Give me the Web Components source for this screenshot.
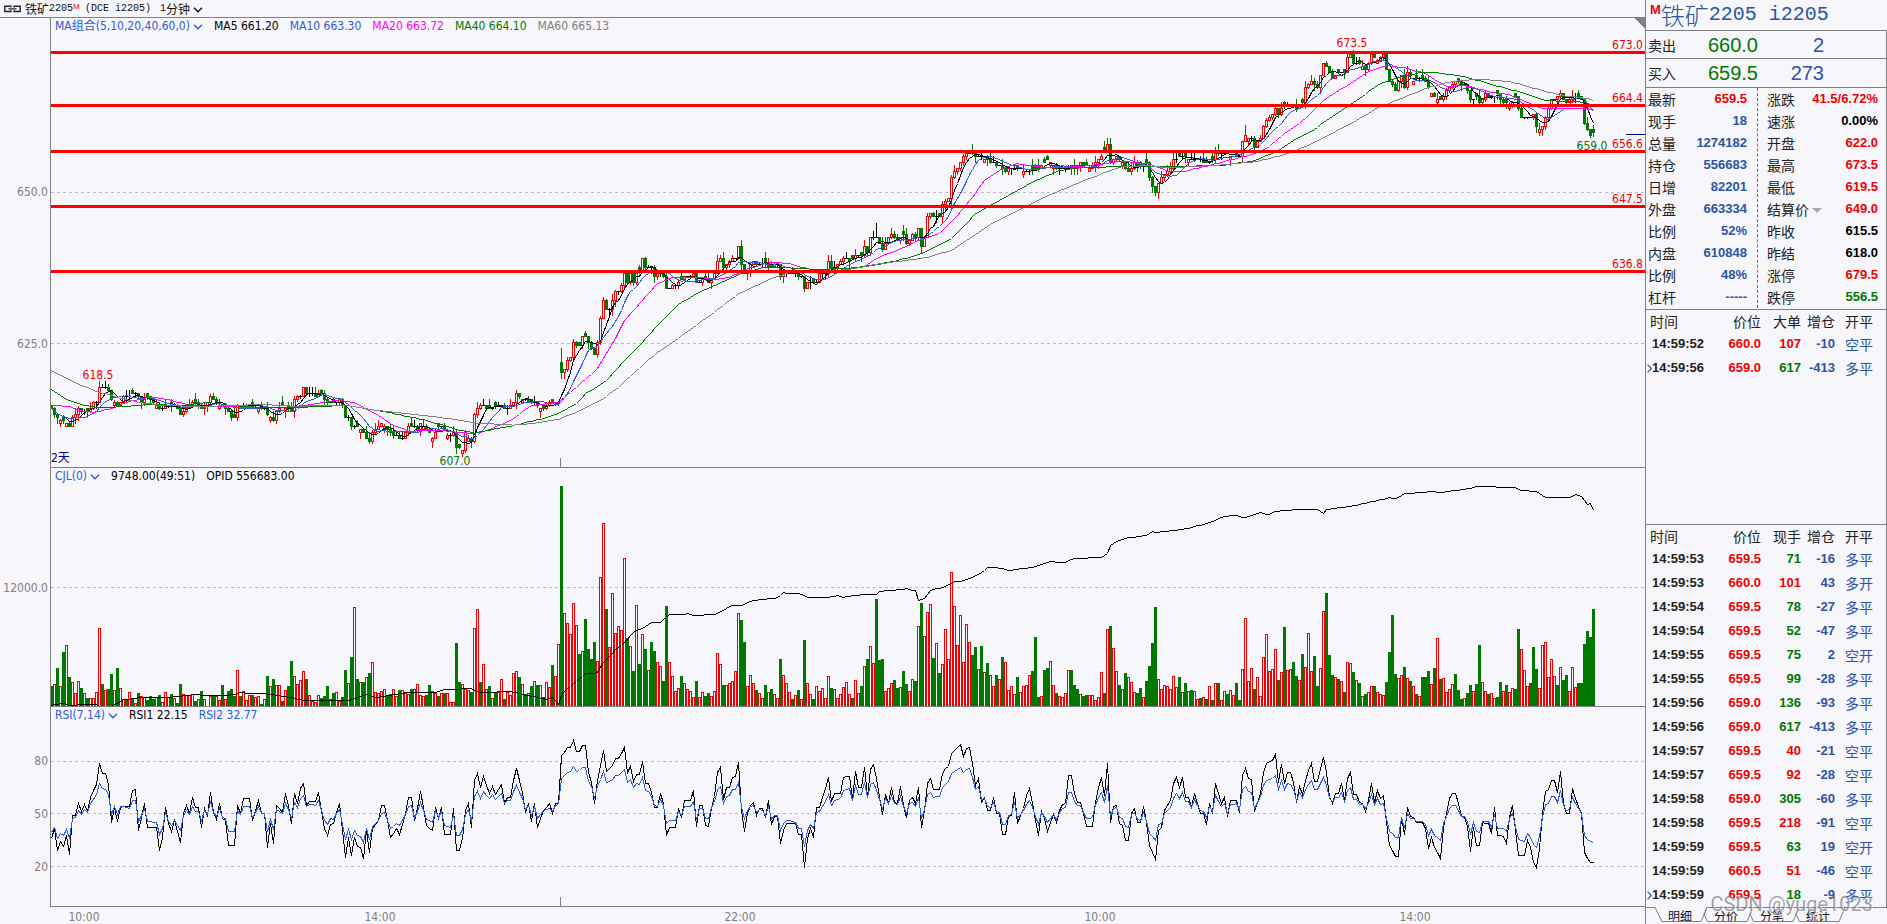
<!DOCTYPE html>
<html lang="zh-CN">
<head>
<meta charset="utf-8">
<title>铁矿2205 1分钟</title>
<style>
html,body{margin:0;height:100%}
body{background:#f6f6fb;color:#222;font:12px/16px "DejaVu Sans Condensed","Noto Sans","Noto Sans CJK SC",sans-serif;overflow:hidden}
</style>
</head>
<body>
<quote-app></quote-app>
<script>
const RED='#f00000',GREEN='#007800',BLUE='#2e5cdc',INK='#000';
const pts=s=>s.trim().split(/\s+/).map(p=>p.split(',').map(Number));
const fill=(s,n=515)=>{const p=pts(s),o=[];let k=0;for(let i=0;i<n;i++){while(k<p.length-2&&p[k+1][0]<=i)k++;const a=p[k],b=p[k+1];o.push(a[1]+(b[1]-a[1])*Math.min(1,(i-a[0])/(b[0]-a[0])))}return o};
const X=i=>51.5+3*i;
let seed=11;const rnd=()=>(seed=(seed*16807)%2147483647)/2147483647;

/* One token per minute: direction, then the top of the bar in thirds of a pixel */
const VOL=`g678 r672 g624 r678 g576 r555 g651 r666 r699 r663 g684 r699 g714 r714 r714 r696 r504 g672 r690 g687 g642 r690 g624 r684 r717 g717 r696 g714 r729 g699 r708 r711 g720 g708 g717 r711 g705 r726 r696 r711 g702 r714 g729 g672 r702 r705 r705 r702 g723 r717 g693 r717 r738 r708 g705 r708 r720 g675 r717 g693 g687 g708 r630 g708 r693 r720 r705 g705 r711 r708 g732 r717 g648 r678 g657 r675 r675 g723 r690 g678 g603 r648 r672 r660 r633 g657 r705 r723 r726 r705 g714 g708 g678 r717 g699 r696 r723 g711 g630 r669 g591 r441 g657 r666 g666 r651 g639 r606 r696 r699 r693 r687 g705 g702 r687 r708 g690 r690 r699 r702 g687 r687 r672 r705 r708 g705 g675 r693 r699 g708 r699 g699 r699 r726 r726 g549 g666 r672 r687 r690 g696 r504 r447 g666 r612 r687 g678 r714 g699 r696 r657 g717 r696 r705 r639 r633 g651 r672 g702 r699 g678 r663 g675 r675 g711 r666 r681 g615 r648 r552
g78 r459 r489 r522 r429 r495 g582 r573 g477 g567 g597 g546 r603 r351 r189 g447 r561 r399 r519 r498 r510 r294 g534 r558 g633 r435 g612 r522 g567 r630 g546 g573 r606 r618 g663 g438 r606 r648 r693 r684 g648 r669 r687 r693 r711 g663 r711 r696 g708 g699 r708 r693 r579 r612 g675 r675 r669 r663 r633 r459 g480 g546 r678 r645 r669 g690 r699 r714 g675 r696 g687 r702 r714 g597 r645 r669 r696 g717 r705 g690 r717 g540 r669 r702 g717 r678 r693 r684 r714 r648 g684 r687 r714 r702 r681 r666 r702 g714 r660 r699 g678 r618 g597 r558 r609 g417 g600 g597 r693 r684 r669 g660 g684 r681 g633 g672 r693 r657 g663 r498 g429 r528 r456 r432 g594 r549 g639 r612 r507 r597 r336 r438 r555 r465 r606 r492 r546 g585 g561 r627 g558 r636 g609 r645 r678 g645 r657 g591 r606 r690 r678 r702 g651 r696 r678 r675 r645 g633 g531 g711 r708 g630 g624 r603 r675 g699 r708 r711 r699 r630 g630 g675 g687
r702 g708 g705 r705 r705 r720 r711 r636 g699 r507 g498 r564 r633 g675 r687 g639 r651 r666 r696 g699 g684 r711 g663 g618 g549 g441 r657 r687 r675 r678 r687 r648 r681 g651 r696 g669 r693 g690 r693 r717 g714 r711 g717 r678 g720 r669 g669 r720 r693 g702 r690 r705 g669 g720 r627 r474 r663 r624 g687 r651 r708 r591 r522 r633 r627 r567 g660 r636 g501 r630 r627 g606 g648 r660 g582 r621 r519 r633 g588 g678 r624 r453 g399 g585 g645 r651 g657 r663 g696 r606 r609 g636 r660 g669 r708 g702 r696 r678 g678 r696 r702 r705 g666 g576 g465 g642 r654 r645 g621 r654 g663 r678 g702 r708 g651 g651 g633 r672 g624 r534 g657 r654 r696 r687 r672 g642 g690 g717 r714 g699 g675 r693 g672 g555 r666 r693 g702 r699 r714 g711 g666 r693 g675 r696 r684 g687 g507 r567 r630 r678 g669 g561 g627 r684 r555 r546 r651 r597 r648 g675 r621 g660 g645 r693 r621 r681 g669 g669 g552 g513 g531 g447`.trim().split(/\s+/).map(t=>[t[0],+t.slice(1)]);

const CLOSE=fill(`0,1225 1,1240 2,1250 3,1262 4,1258 5,1265 6,1275 7,1250 8,1245 9,1228 10,1232 12,1230 13,1220 14,1210 15,1205 16,1165 17,1160 18,1160 19,1172 20,1195 21,1205 22,1215 23,1205 24,1190 26,1190 28,1175 29,1190 30,1205 32,1190 34,1210 36,1225 38,1215 40,1215 42,1222 43,1240 45,1220 47,1205 49,1215 50,1225 52,1210 53,1190 55,1210 57,1215 59,1235 60,1250 61,1252 62,1215 65,1212 67,1215 69,1222 71,1222 72,1240 73,1255 74,1262 75,1230 77,1218 79,1225 80,1235 81,1195 83,1185 84,1165 85,1180 88,1185 90,1180 92,1210 94,1208 96,1195 97,1215 98,1250 99,1255 100,1280 102,1275 104,1300 106,1320 107,1295 108,1290 110,1270 112,1285 114,1305 117,1315 119,1275 121,1280 122,1290 123,1265 125,1285 127,1310 129,1280 130,1275 132,1305 134,1300 135,1340 137,1348 138,1300 140,1325 141,1245 142,1220 144,1215 146,1225 148,1215 150,1215 152,1225 154,1210 155,1180 156,1190 158,1200 160,1205 162,1215 164,1225 166,1205 169,1205
170,1112 171,1105 172,1078 173,1075 174,1030 176,1035 177,1010 178,1005 179,1030 180,1045 181,1058 182,1022 183,958 184,900 185,928 186,925 187,900 188,873 189,870 190,855 191,820 192,845 193,820 194,845 195,815 196,808 197,775 198,802 200,802 201,830 203,815 204,825 205,865 207,858 209,850 211,825 213,830 214,820 215,848 217,835 219,845 221,820 222,785 223,775 224,800 226,780 228,770 229,740 230,790 231,820 232,810 234,780 236,795 238,780 240,800 242,790 243,825 245,815 248,820 250,830 251,865 252,850 255,845 256,820 258,815 259,785 260,800 262,795 264,775 266,780 268,765 270,765 271,740 272,755 273,715 275,712 276,730 277,748 278,725 280,705 282,720 284,700 285,730 287,705 288,710 289,685 290,740 291,715 292,650 293,635 294,645 295,650 296,648 297,615 298,605 299,590 300,530 302,500 304,470 306,455 307,460 311,475 314,485 318,510 322,500 325,515 329,500 332,480 335,505 340,505
343,490 344,495 346,500 348,490 350,470 352,430 353,490 355,465 357,490 359,515 361,490 363,495 365,490 366,535 367,560 368,578 369,545 371,520 373,505 374,475 376,470 378,465 380,480 382,475 384,485 386,490 388,455 390,460 393,465 396,465 397,425 398,405 400,415 401,437 403,415 404,375 406,350 408,325 409,345 410,320 412,315 414,315 415,325 417,305 418,265 420,240 422,260 424,185 425,200 427,235 429,220 431,215 432,175 433,165 434,190 436,185 438,205 440,165 442,180 444,165 445,205 446,240 448,268 450,225 451,260 452,215 454,240 456,235 458,240 460,275 462,295 463,300 464,285 466,260 468,240 469,245 471,250 473,295 475,290 476,305 478,280 480,290 482,280 484,305 486,315 488,290 490,350 492,350 494,345 495,375 496,385 497,380 498,350 500,300 501,295 503,275 505,310 507,285 509,290 510,295 511,365 512,385 513,403 514,400`);

const MA60=fill(`0,1110 10,1156 17,1178 24,1195 30,1207 37,1215 51,1218 70,1212 81,1217 98,1215 109,1230 126,1247 132,1254 141,1267 154,1274 160,1269 169,1256 175,1235 183,1200 189,1160 200,1070 206,1032 214,980 222,928 229,880 239,838 246,817 253,812 265,808 276,790 291,772 300,750 313,672 327,608 333,582 343,545 350,520 356,500 365,495 372,502 389,494 402,483 412,460 420,430 434,365 442,322 457,268 464,248 470,240 477,236 487,245 499,275 505,288 510,290 514,300`);
const MA40=fill(`0,1167 5,1196 11,1215 16,1222 24,1218 33,1212 44,1215 52,1205 59,1214 71,1222 78,1222 98,1215 112,1235 126,1262 135,1287 141,1298 149,1283 153,1278 160,1262 165,1252 169,1238 175,1210 178,1180 185,1140 191,1080 197,1025 203,965 209,912 216,875 224,843 231,815 239,798 246,802 256,807 266,803 275,793 282,780 290,760 300,715 308,640 318,590 328,540 336,510 343,500 350,500 357,497 365,498 376,498 391,494 400,482 407,460 414,420 420,392 428,342 435,300 443,248 450,228 456,217 462,217 471,228 480,252 491,278 498,300 505,303 511,305 514,315`);
const MA20=fill(`0,1214 6,1218 9,1230 14,1235 20,1225 25,1205 33,1190 39,1197 44,1210 51,1218 59,1217 64,1222 78,1222 86,1213 96,1198 101,1207 108,1240 113,1270 119,1292 130,1290 141,1300 146,1287 153,1260 160,1215 169,1205 175,1160 182,1105 187,1030 191,960 196,910 202,848 207,832 215,830 221,837 226,830 232,805 239,786 245,788 251,802 258,815 262,805 270,802 276,770 283,745 289,720 296,700 302,645 307,590 311,540 317,505 322,490 330,500 338,500 343,498 349,492 356,482 366,490 372,512 378,512 388,490 400,462 405,445 411,400 418,355 424,300 433,248 439,212 445,195 452,203 458,220 465,258 471,255 480,275 486,283 493,310 497,325 505,325 512,325 514,328`);
const OPI=fill(`0,736 3,728 6,734 15,732 16,738 20,738 24,718 30,711 39,711 47,703 59,705 63,697 71,700 78,708 84,720 99,721 105,703 108,711 119,695 128,695 132,686 140,685 143,697 153,692 157,702 165,716 167,711 169,731 170,705 171,692 175,662 178,640 182,637 184,606 188,568 191,547 194,515 197,503 200,485 203,485 206,463 212,460 215,466 222,460 226,437 230,434 234,420 242,412 244,397 250,401 252,411 258,412 262,405 264,411 268,404 275,401 276,393 285,385 288,391 289,420 291,413 293,390 298,378 301,364 304,361 309,342 312,322 315,320 319,330 327,320 333,304 338,306 340,296 350,290 352,278 353,255 355,242 359,232 365,225 367,212 368,216 377,207 386,187 390,170 394,164 398,172 403,157 406,163 407,155 412,149 422,146 424,160 425,147 434,136 446,112 448,115 451,100 461,93 462,97 470,88 475,79 488,80 490,91 495,92 498,112 506,112 508,103 510,107 512,133 513,130 514,149`);
const RSI1=fill(`0,1135 1,1105 2,1170 3,1142 4,1158 5,1125 6,1183 7,1066 8,1064 9,1028 10,1052 11,1032 12,1052 13,1010 15,972 16,910 17,938 18,940 19,972 20,1085 21,1040 22,1083 23,1040 26,1038 27,990 28,988 29,1110 31,1030 32,1102 35,1102 36,1170 37,1130 38,1040 39,1090 40,1112 41,1080 43,1145 44,1060 45,1035 46,1060 47,1010 48,1042 49,1042 50,1100 51,1045 52,1068 53,995 54,1055 55,1078 56,1030 57,1075 58,1080 59,1155 61,1155 62,1035 63,1060 64,1015 66,1015 67,1080 69,1020 70,1058 71,1058 72,1162 73,1090 74,1150 75,1035 77,1055 78,1000 79,1035 80,1090 81,1000 82,1030 83,985 84,968 85,1035 86,1022 88,1022 89,995 90,1050 91,1105 92,1125 93,1092 94,1090 95,1055 96,1028 97,1110 98,1192 99,1130 100,1185 101,1130 102,1158 103,1160 104,1195 105,1110 106,1175 107,1105 109,1080 110,1035 111,1035 112,1080 113,1132 115,1105 116,1122 118,1060 119,1010 120,1010 121,1080 122,1045 123,993 124,1040 125,1095 127,1110 128,1042 129,1075 130,1040 131,1122 133,1122 134,1045 135,1170 136,1170 137,1135 138,1050 139,1030 140,1100 141,960 142,938 143,980 144,948 145,975 146,998 147,978 148,1003 150,972 151,1030 152,1010 153,1010 154,960 155,925 156,960 157,995 158,1055 159,1030 160,1083 161,1030 162,1102 163,1075 164,1050 166,1030 167,1058 168,1028 169,1028
170,885 171,875 172,862 173,862 174,840 175,873 176,873 177,856 178,856 179,935 180,965 181,1028 182,960 183,915 184,870 185,933 187,915 188,895 189,895 191,862 192,935 193,918 194,962 195,942 196,942 197,902 198,970 199,970 200,995 201,1042 202,1042 203,1000 204,1030 205,1125 206,1102 208,1102 209,1045 210,1072 211,1020 213,1020 214,990 215,1097 216,1035 217,1035 218,1095 219,1097 220,1040 221,1008 222,935 223,920 224,1018 225,982 226,980 227,950 228,948 229,907 230,1050 231,1113 232,1060 233,1035 234,1025 235,1065 236,1045 237,1045 238,1070 239,1020 240,1092 241,1068 242,1068 243,1150 244,1110 245,1090 248,1090 249,1122 250,1122 251,1222 252,1135 253,1105 254,1130 255,1042 256,1040 257,1010 258,985 259,950 260,1022 261,1000 263,1000 264,950 266,948 267,1015 268,932 269,982 270,982 271,920 272,1008 273,928 274,912 275,955 276,1010 277,1062 278,1003 279,1030 280,980 281,1025 282,1028 283,978 284,1035 285,1070 286,1020 287,1010 288,1030 289,982 290,1102 291,1050 292,968 293,955 294,988 296,988 297,940 298,925 299,918 300,880 302,862 303,853 304,887 305,865 306,862 307,910 308,975 309,955 310,1025 311,1010 312,1050 313,1050 314,1012 315,1060 316,1060 317,1123 318,1123 319,1068 320,1065 321,995 322,1088 323,1065 324,1045 325,1005 326,985 327,1030 328,1080 329,1125 330,1052 331,1075 332,1112 333,1085 334,1062 335,1087 336,1050 337,1032 338,1030 339,946 340,946 341,1000 342,1025
343,1025 344,1060 345,1098 347,1098 348,1025 349,980 350,950 351,1005 352,908 353,1085 354,1038 355,1035 356,1090 357,1095 358,1140 359,1140 360,1060 361,1045 362,1087 363,1085 364,1037 365,1085 366,1155 367,1175 368,1198 369,1110 370,1100 371,1050 373,1020 374,970 375,950 376,982 377,952 378,1010 379,1012 380,1042 381,998 382,1030 383,1058 384,1060 385,1092 386,1028 387,1060 388,968 390,1030 391,1010 392,1068 393,1020 395,1020 396,1055 397,945 398,923 399,953 400,957 401,1053 403,1000 404,935 405,910 406,902 407,900 408,883 409,965 410,912 411,970 412,935 413,935 414,965 415,1025 416,978 417,1003 418,960 419,930 420,908 421,962 422,962 423,925 424,890 425,935 426,1008 427,1028 428,1000 429,1000 430,970 431,1020 432,955 433,935 434,1002 435,1002 436,1027 437,1028 438,1053 439,1020 440,970 441,1025 442,990 443,1015 444,1005 445,1085 446,1155 447,1170 448,1188 449,1188 450,1070 451,1122 452,1040 453,1068 454,1070 455,1085 457,1087 458,1105 459,1165 460,1132 461,1160 462,1175 463,1195 464,1100 465,1060 466,1015 467,1000 468,1000 469,1030 470,1068 471,1070 472,1098 473,1173 474,1100 475,1155 476,1155 477,1087 479,1088 480,1118 481,1042 482,1125 484,1127 485,1150 486,1070 487,1035 488,1110 489,1185 491,1186 492,1140 493,1160 494,1205 495,1222 496,1165 497,1060 498,992 499,988 500,960 501,960 502,997 503,932 504,1030 505,1060 506,1060 507,985 508,1015 509,1038 510,1058 511,1175 512,1195 513,1207 514,1207`);

const line=(a,off,color,w=1)=>`<polyline fill="none" stroke="${color}" stroke-width="${w}" points="${a.map((v,i)=>X(i)+','+(Math.round(v/3+off)+.5)).join(' ')}"/>`;
const avg=(a,n)=>a.map((_,i)=>{const s=a.slice(Math.max(0,i-n+1),i+1);return s.reduce((x,y)=>x+y,0)/s.length});
const dash=y=>`<path d="M51 ${y}.5H1645" stroke="#bbbbc1" stroke-dasharray="3 3"/>`;
const tick=(a,b)=>`<path d="M560.5 ${a}V${b}" stroke="#808080"/>`;

function priceArt(){
  const cl=CLOSE.map(v=>Math.round(v/9)*3),extra={16:[6,0],170:[14,6],275:[14,0],352:[6,2],368:[0,3],434:[4,0],398:[10,0],497:[0,6],514:[4,4],137:[0,3]};
  let s='';
  cl.forEach((c,i)=>{
    let o=i?cl[i-1]:c-3;if(i===170)o=c-10;
    const [d]=VOL[i];
    if(d==='g'&&o>=c&&rnd()<.8)o=c-3;
    if(d==='r'&&o<c&&rnd()<.7)o=c+3;
    const col=o===c?INK:o<c?GREEN:RED;
    const t=Math.min(o,c),h=Math.abs(o-c),e=extra[i]||[Math.floor(rnd()*3)*(rnd()<.5?3:1),Math.floor(rnd()*3)*(rnd()<.5?3:1)];
    const x=50+3*i,m=x+1.5;
    s+=`<path d="M${m} ${t-e[0]}V${t}M${m} ${t+h}V${t+h+e[1]+1}" stroke="${col}"/>`;
    s+=h===0?`<path d="M${x} ${t+.5}h3" stroke="${col}"/>`:col===GREEN?`<path d="M${x} ${t}h3v${h+1}h-3z" fill="${GREEN}"/>`:`<path d="M${x+.5} ${t+.5}h2v${h}h-2z" fill="#f6f6fb" stroke="${RED}"/>`;
  });
  const reds=[52,105,151,206,271].map(y=>`<path d="M51 ${y}.5H1645" stroke="#f00" stroke-width="3"/>`).join('');
  return dash(192)+dash(343)+s+line(avg(CLOSE,5),0,INK)+line(avg(CLOSE,10),0,BLUE)+line(MA20,0,'#f0f')+line(MA40,0,GREEN)+line(MA60,0,'#808080')+reds+tick(458,467)+'<path d="M1626 134.5H1645" stroke="#000090"/><path d="M1635 18H1645V29z" fill="#808080"/>';
}
function volumeArt(){
  return dash(587)+VOL.map(([d,v],i)=>{const x=50+3*i,y=Math.round(v/3)+460;return v>737?'':d==='g'?`<path d="M${x} ${y}h3V706h-3z" fill="${GREEN}"/>`:`<path d="M${x+.5} 707V${y+.5}h2V707" fill="none" stroke="${RED}"/>`}).join('')+line(OPI,460,INK);
}
function rsiArt(){
  const slow=RSI1.map((_,i)=>{const s=RSI1.slice(Math.max(0,i-8),i+4);return s.reduce((a,b)=>a+b,0)/s.length});
  const r2=RSI1.map((v,i)=>1060+.52*(v-1060)+.2*(slow[i]-1060));
  return dash(761)+dash(813)+dash(866)+line(RSI1,460,INK)+line(r2,460,BLUE)+tick(897,906);
}
const ART={price:[priceArt,18,449],volume:[volumeArt,468,238],rsi:[rsiArt,707,199]};

function define(name,html,setup){
  const t=document.createElement('template');t.innerHTML=html;
  customElements.define(name,class extends HTMLElement{
    constructor(){super();this.attachShadow({mode:'open'}).append(t.content.cloneNode(true));}
    connectedCallback(){if(setup&&!this.ready){this.ready=true;setup(this,this.shadowRoot)}}
  });
}
const chevron='<svg width="10" height="6" viewBox="0 0 10 6" aria-hidden="true"><path d="M1 .8L5 4.800L9 .8" fill="none" stroke="currentColor" stroke-width="1.4"/></svg>';

/* Legend drop-down */
define('menu-button',`<style>:host{display:inline-flex}button{all:unset;display:flex;align-items:center;gap:3px;white-space:nowrap;cursor:pointer}svg{margin-top:2px}</style><button type="button"><slot></slot>${chevron}</button>`);

define('title-bar',`<style>
:host{display:flex;align-items:center;box-sizing:border-box;border-bottom:1px solid #808080;height:18px;padding-left:4px;color:#111;font:10px/16px "Liberation Mono","Noto Sans CJK SC",monospace;white-space:pre}
b{font:12px/16px "Noto Sans CJK SC",sans-serif}sup{color:#f00000;font:8px/8px "Liberation Sans",sans-serif;align-self:flex-start;margin-top:3px;width:6px}
.link{margin-right:4px}menu-button{margin-left:9px}.tight{display:flex}
</style><svg class="link" width="17" height="8" viewBox="0 0 17 8" aria-hidden="true"><g fill="none" stroke="#222" stroke-width="1.4"><path d="M7 2.500V1.200H.8V6.500H7V5.200M10 2.500V1.200H16.200V6.500H10V5.200M4.500 3.900H12.500"/></g></svg><b>铁矿</b>2205<sup>M</sup> (DCE i2205)<menu-button><span class="tight">1<b>分钟</b></span></menu-button>`);

define('plot-pane',`<style>
:host{display:grid;grid-template-columns:50px minmax(0,1fr);min-height:0}
.axis{position:relative;color:#808080}
.plot{position:relative;border-left:1px solid #808080;border-bottom:1px solid #808080;min-width:0}
.plot>svg{position:absolute;inset:0;width:100%;height:100%;display:block}
.legend{position:relative;display:flex;gap:11px;padding-left:4px;white-space:nowrap}
.tag{position:absolute;transform:translate(-50%,-50%);white-space:nowrap}
.tag.end{transform:translate(0,-50%);right:2px}
.tag.start{transform:translate(0,-50%)}
</style><div class="axis"></div><div class="plot"><svg preserveAspectRatio="none" shape-rendering="crispEdges" role="img"></svg><div class="legend"><slot></slot></div></div>`,
(el,root)=>{
  const [art,top,h]=ART[el.getAttribute('kind')],svg=root.querySelector('.plot>svg');
  svg.setAttribute('viewBox',`51 ${top} 1594 ${h}`);svg.setAttribute('aria-label',el.getAttribute('label'));svg.innerHTML=art();
  const add=(box,text,y,cls,color,x)=>{const s=document.createElement('span');s.className='tag '+cls;s.textContent=text;s.style.top=(y-top)/h*100+'%';if(color)s.style.color=color;if(x)s.style.left=(x-51)/1594*100+'%';box.append(s)};
  (el.getAttribute('scale')||'').split(' ').forEach(p=>{const [t,y]=p.split('@');add(root.querySelector('.axis'),t,+y,'end')});
  (el.getAttribute('tags')||'').split(' ').filter(Boolean).forEach(p=>{const [t,y,c,x,k]=p.split('@');add(root.querySelector('.plot'),t,+y,x?(k||''):'end',c,+x)});
});

define('time-axis',`<style>:host{display:block;position:relative;margin-left:51px;color:#808080}span{position:absolute;top:2px;line-height:16px;transform:translate(-50%,0)}</style>`,
(el,root)=>[['10:00',84],['14:00',380],['22:00',740],['10:00',1100],['14:00',1415]].forEach(([t,x])=>{const s=document.createElement('span');s.textContent=t;s.style.left=(x-51)/1594*100+'%';root.append(s)}));

const num='font:bold 13px/20px "Liberation Sans",sans-serif';
define('quote-stats',`<style>
:host{display:grid;grid-template-columns:111px minmax(0,1fr);padding-bottom:1px;border-bottom:1px solid #808080}
dl{margin:0;padding:0 10px 0 2px}dl+dl{border-left:1px dashed #707070;padding:0 9px}
div{display:flex;justify-content:space-between;align-items:center;height:22px}
dt{font:14px/20px "Noto Sans CJK SC",sans-serif}dd{margin:0;${num};color:#2b55a0}
.r{color:#f00000}.g{color:#007800}.k{color:#000}
button{all:unset;cursor:pointer}button i{display:inline-block;border:5px solid transparent;border-top-color:#aaa;border-bottom:0;margin-left:3px;vertical-align:2px}
</style><dl></dl><dl></dl>`,
(el,root)=>{
  const data=['最新|659.5|r 现手|18| 总量|1274182| 持仓|556683| 日增|82201| 外盘|663334| 比例|52%| 内盘|610848| 比例|48%| 杠杆|-----|','涨跌|41.5/6.72%|r 速涨|0.00%|k 开盘|622.0|r 最高|673.5|r 最低|619.5|r 结算价|649.0|r 昨收|615.5|k 昨结|618.0|k 涨停|679.5|r 跌停|556.5|g'];
  root.querySelectorAll('dl').forEach((d,i)=>d.innerHTML=data[i].split(' ').map(r=>{const [a,b,c]=r.split('|');return `<div><dt>${a==='结算价'?'<button type="button">结算价<i></i></button>':a}</dt><dd class="${c}">${b}</dd></div>`}).join(''));
});

define('trade-list',`<style>
:host{display:block}
table{border-collapse:collapse;table-layout:fixed;width:100%}
th{font:14px/22px "Noto Sans CJK SC",sans-serif;padding:0;height:22px;text-align:right}
td{padding:0;height:24px;text-align:right;${num}}
th:first-child{text-align:left;padding-left:4px}td:first-child{text-align:left;padding-left:6px;position:relative}
th:last-child,td:last-child{text-align:left;padding-left:10px;font:14px/20px "Noto Sans CJK SC",sans-serif}
td:nth-child(4),td:last-child{color:#2b55a0}
.r{color:#f00000}.g{color:#007800}
svg{position:absolute;left:1px;top:8px}
</style><table><colgroup><col style="width:60px"><col style="width:55px"><col style="width:40px"><col style="width:34px"><col></colgroup><thead><tr></tr></thead><tbody></tbody></table>`,
(el,root)=>{
  root.querySelector('tr').innerHTML=['时间','价位',el.getAttribute('column'),'增仓','开平'].map(t=>`<th scope="col">${t}</th>`).join('');
  const rows=el.getAttribute('rows').split(' ');
  root.querySelector('tbody').innerHTML=rows.map((r,i)=>{const [s,p,v,c,d,k]=r.split('|');return `<tr><td>${i===rows.length-1?'<svg width="5" height="9" viewBox="0 0 5 9" aria-hidden="true"><path d="M.6.6L4.300 4.500L.6 8.400" fill="none" stroke="#2b65b0" stroke-width="1.3"/></svg>':''}14:59:${s}</td><td class="r">${p}</td><td class="${c}">${v}</td><td>${d}</td><td>${k}</td></tr>`}).join('');
});

define('panel-tabs',`<style>
:host{display:flex;height:17px;padding-left:9px;background:linear-gradient(#808080,#808080) 0 0/9px 1px no-repeat}
button{all:unset;position:relative;width:46px;height:17px;padding-left:4px;box-sizing:border-box;text-align:center;font:12px/14px "Noto Sans CJK SC",sans-serif;color:#111;cursor:pointer}
svg{position:absolute;left:0;top:0;overflow:visible}
i{flex:1;margin-left:6px;border-top:1px solid #808080}
</style>`,
(el,root)=>{root.innerHTML+=['明细','分价','分笔','统计'].map((t,i)=>`<button type="button" aria-pressed="${!i}"><svg width="52" height="16" viewBox="0 0 52 16" aria-hidden="true"><path d="${i?'M46 .5H6L3 7L6.500 14.500H46L52 .5H46':'M0 .5L7 14.500H46L52 .5'}" fill="none" stroke="#808080"/></svg>${t}</button>`).join('')+'<i></i>'});

define('quote-panel',`<style>
:host{display:grid;grid-template-rows:31px 28px 29px auto 215px minmax(0,1fr) 17px;box-sizing:border-box;border-left:1px solid #808080;position:relative}
h1{margin:0;display:flex;align-items:center;color:#2b55a0;font:20px/30px "Liberation Mono",monospace;white-space:pre;border-bottom:1px solid #808080}
h1 b{font:300 24px/30px "Noto Sans CJK SC",sans-serif}h1 sup{font:bold 13px/14px "Liberation Sans",sans-serif;color:#f00000;align-self:flex-start;margin:3px 0 0 4px}
.quote{display:grid;grid-template-columns:30px 80px 66px;align-items:center;padding-left:2px;border-bottom:1px solid #808080;font:20px/26px "Liberation Sans",sans-serif;text-align:right;color:#2b55a0}
.quote label{font:14px/20px "Noto Sans CJK SC",sans-serif;color:#222;text-align:left}.quote output:nth-child(2){color:#007800}
trade-list.big{border-bottom:1px solid #808080}
.edge{position:absolute;right:0;top:30px;bottom:17px;border-right:1px solid #808080}
.mark{position:absolute;right:14px;bottom:8px;font:20px/24px Roboto,sans-serif;color:rgba(110,110,115,.65);text-shadow:1px 1px 0 rgba(255,255,255,.8);pointer-events:none;white-space:nowrap}
</style>
<h1><sup>M</sup><b>铁矿</b>2205 i2205</h1>
<div class="quote"><label for="a">卖出</label><output id="a">660.0</output><output>2</output></div>
<div class="quote"><label for="b">买入</label><output id="b">659.5</output><output>273</output></div>
<quote-stats></quote-stats>
<trade-list class="big" column="大单" rows="52|660.0|107|r|-10|空平 56|659.0|617|g|-413|多平"></trade-list>
<trade-list column="现手" rows="53|659.5|71|g|-16|多平 53|660.0|101|r|43|多开 54|659.5|78|g|-27|多平 54|659.5|52|g|-47|多平 55|659.5|75|g|2|空开 55|659.5|99|g|-28|多平 56|659.0|136|g|-93|多平 56|659.0|617|g|-413|多平 57|659.5|40|r|-21|空平 57|659.5|92|r|-28|空平 58|659.0|305|g|-60|多平 58|659.5|218|r|-91|空平 59|659.5|63|g|19|空开 59|660.5|51|r|-46|空平 59|659.5|18|g|-9|多平"></trade-list>
<panel-tabs></panel-tabs><div class="edge"></div><span class="mark">CSDN @yuge1023</span>`);

define('quote-app',`<style>
:host{display:grid;grid-template-columns:minmax(0,1fr) 242px;height:100vh}
main{display:grid;grid-template-rows:18px 450fr 239fr 200fr 17px;min-width:0;min-height:0}
.b{color:#2e5cdc}.k{color:#000}.m{color:#f0f}.g{color:#007800}.y{color:#808080}
</style>
<main><title-bar></title-bar>
<plot-pane kind="price" label="价格" scale="650.0@192 625.0@343" tags="673.0@45@#f00000 664.4@98@#f00000 656.6@144@#f00000 647.5@199@#f00000 636.8@264@#f00000 618.5@375@#f00000@98 673.5@43@#f00000@1352 607.0@461@#007800@455 659.0@146@#007800@1592 2天@458@#000090@51@start"><menu-button class="b">MA组合(5,10,20,40,60,0)</menu-button><span class="k">MA5 661.20</span><span class="b">MA10 663.30</span><span class="m">MA20 663.72</span><span class="g">MA40 664.10</span><span class="y">MA60 665.13</span></plot-pane>
<plot-pane kind="volume" label="成交量" scale="12000.0@587"><menu-button class="b">CJL(0)</menu-button><span class="k">9748.00(49:51)</span><span class="k">OPID 556683.00</span></plot-pane>
<plot-pane kind="rsi" label="RSI" scale="80@761 50@813 20@866"><menu-button class="b">RSI(7,14)</menu-button><span class="k">RSI1 22.15</span><span class="b">RSI2 32.77</span></plot-pane>
<time-axis></time-axis></main>
<quote-panel></quote-panel>`);
</script>
</body>
</html>
